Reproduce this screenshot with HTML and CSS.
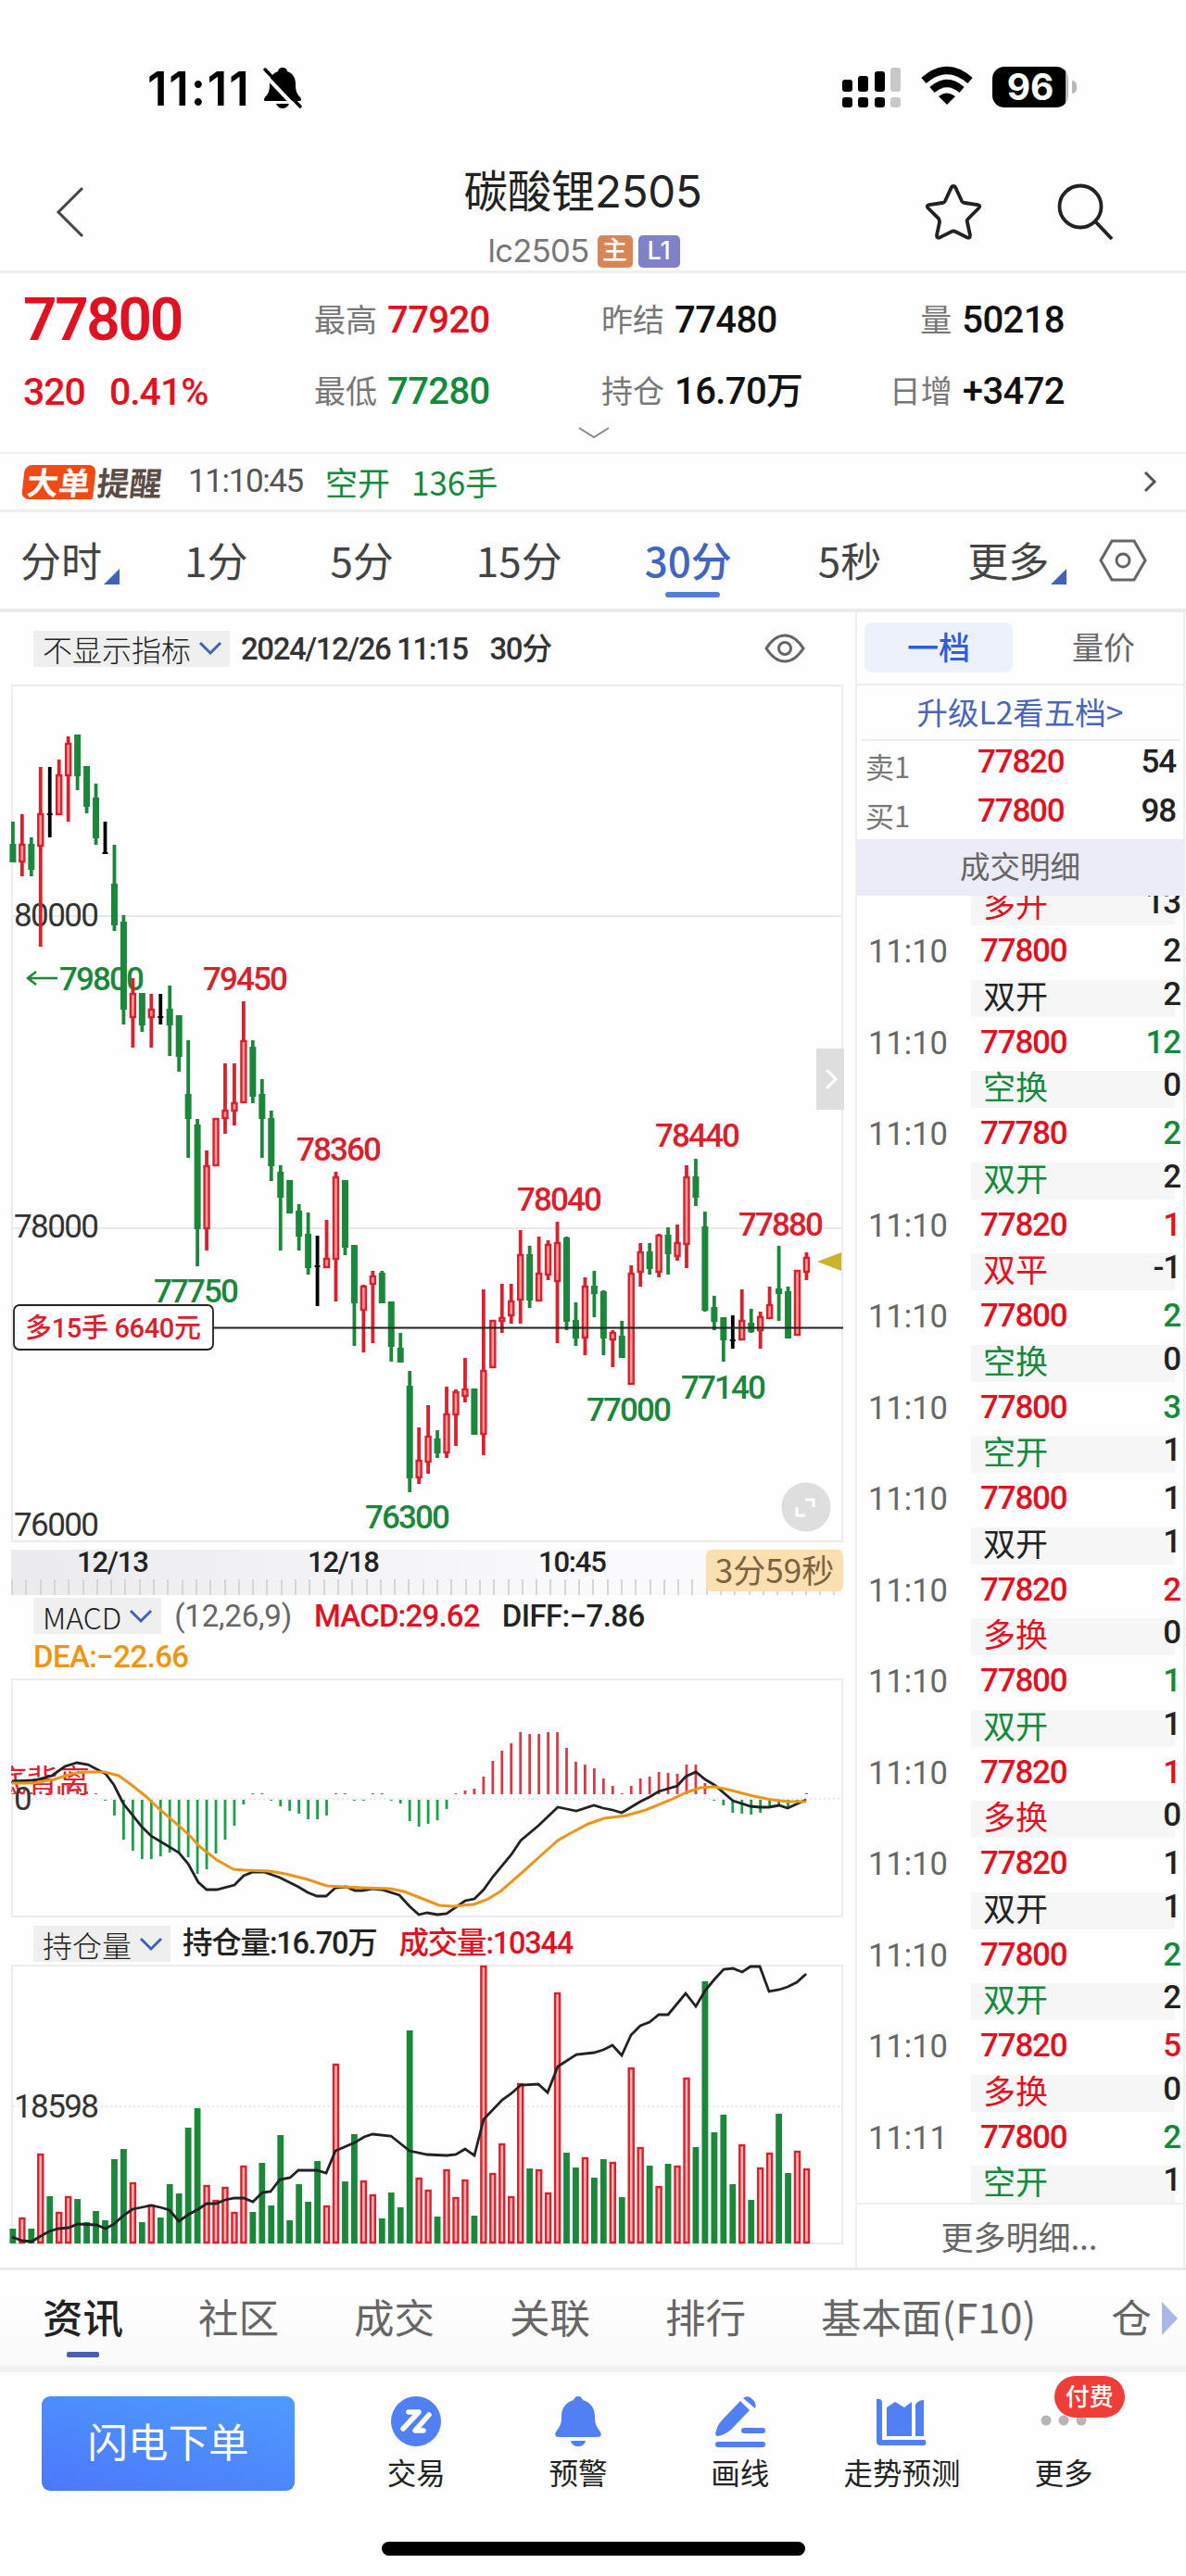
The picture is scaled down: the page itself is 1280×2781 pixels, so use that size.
FILE: index.html
```html
<!DOCTYPE html>
<html lang="zh-CN">
<head>
    <meta charset="UTF-8">
    <meta name="viewport" content="width=device-width, initial-scale=1.0">
    <title>碳酸锂2505</title>
    <link rel="stylesheet" href="styles.css">
    <script src="chart.js" defer></script>
</head>
<body>
    <div class="status-bar">
        <span class="clock">11:11</span>
        <svg class="mute" width="44" height="46" viewBox="0 0 44 46">
            <path d="M22 1c3 0 5 2 5 4 6 2 9 7 9 14 0 8 2 11 5 14 2 3 1 4-1 4H4c-2 0-3-1-1-4 3-3 5-6 5-14 0-7 3-12 9-14 0-2 2-4 5-4z"/>
            <path d="M15 40h14c-1 3-4 5-7 5s-6-2-7-5z"/>
            <path d="M-1 5l40 42" stroke="#fff" stroke-width="4"/>
            <path d="M3 3l38 40" stroke="#000" stroke-width="3.5" stroke-linecap="round"/>
        </svg>
        <svg class="signal" width="64" height="46" viewBox="0 0 64 46">
            <rect x="0" y="14" width="11" height="13" rx="3"/><rect x="17" y="10" width="11" height="17" rx="3"/><rect x="35" y="5" width="11" height="22" rx="3"/>
            <rect x="52" y="1" width="11" height="26" rx="3" fill="#c8c8c8"/>
            <rect x="0" y="33" width="11" height="11" rx="3"/><rect x="17" y="33" width="11" height="11" rx="3"/><rect x="35" y="33" width="11" height="11" rx="3"/>
            <rect x="52" y="33" width="11" height="11" rx="3" fill="#c8c8c8"/>
        </svg>
        <svg class="wifi" width="56" height="42" viewBox="0 0 56 42" fill="none" stroke="#000" stroke-width="8">
            <path d="M3 15Q28-7 53 15"/>
            <path d="M12 25Q28 11 44 25"/>
            <path d="M28 41l-9-9q9-7 18 0z" fill="#000" stroke="none"/>
        </svg>
        <span class="battery">96</span><i class="battery-tip"></i>
    </div>

    <header class="header">
        <svg class="back" width="30" height="56" viewBox="0 0 30 56"><path d="M28 2L2 28l26 26"/></svg>
        <div class="title">
            <h1>碳酸锂2505</h1>
            <p>lc2505<b class="tag main">主</b><b class="tag level">L1</b></p>
        </div>
        <svg class="star" width="62" height="62" viewBox="0 0 62 62"><path d="M31 3q2 0 3 3l6 13q1 2 3 2l14 2q4 1 1 4L47 38q-2 2-1 4l3 14q0 4-4 2l-12-6q-2-1-4 0l-12 6q-4 2-4-2l3-14q0-2-1-4L4 27q-3-3 1-4l14-2q2 0 3-2l6-13q1-3 3-3z"/></svg>
        <svg class="search" width="62" height="62" viewBox="0 0 62 62"><circle cx="25" cy="25" r="22.500"/><path d="M41 41l18 19"/></svg>
    </header>

    <section class="quote">
        <div class="price num red">77800</div>
        <div class="cell"><span>最高</span><b class="num red">77920</b></div>
        <div class="cell"><span>昨结</span><b class="num">77480</b></div>
        <div class="cell right"><span>量</span><b class="num">50218</b></div>
        <div class="change num red"><span>320</span><span>0.41%</span></div>
        <div class="cell"><span>最低</span><b class="num green">77280</b></div>
        <div class="cell"><span>持仓</span><b class="num">16.70万</b></div>
        <div class="cell right"><span>日增</span><b class="num">+3472</b></div>
        <svg class="more" width="34" height="14" viewBox="0 0 34 14"><path d="M1 2l16 10L33 2"/></svg>
    </section>

    <section class="alert">
        <b class="big">大单</b><b class="remind">提醒</b>
        <span class="num time">11:10:45</span>
        <span class="green dir">空开</span>
        <span class="green vol">136手</span>
        <svg width="14" height="24" viewBox="0 0 14 24"><path d="M2 2l10 10L2 22"/></svg>
    </section>

    <nav class="period">
        <span class="drop">分时</span>
        <span>1分</span>
        <span>5分</span>
        <span>15分</span>
        <span class="active">30分</span>
        <span class="sec">5秒</span>
        <span class="drop other">更多</span>
        <svg width="52" height="46" viewBox="0 0 52 46"><path d="M14 2h24l12 21-12 21H14L2 23z"/><circle cx="26" cy="23" r="7"/></svg>
    </nav>

    <main class="content">
        <div class="charts">
            <div class="bar top">
                <span class="select">不显示指标<svg width="26" height="16" viewBox="0 0 26 16"><path d="M2 2l11 11L24 2"/></svg></span>
                <span class="num date">2024/12/26 11:15</span>
                <span class="num period-name">30分</span>
                <svg class="eye" width="44" height="32" viewBox="0 0 44 32"><path d="M2 16Q11 2 22 2t20 14Q33 30 22 30T2 16z"/><circle cx="22" cy="16" r="6.500"/></svg>
            </div>
            <svg class="plot" id="kline" width="898" height="926" viewBox="0 0 898 926"></svg>
            <div class="axis">
                <span>12/13</span><span>12/18</span><span>10:45</span>
                <b>3分59秒</b>
            </div>
            <div class="bar macd">
                <span class="select">MACD<svg width="26" height="16" viewBox="0 0 26 16"><path d="M2 2l11 11L24 2"/></svg></span>
                <span class="num gray">(12,26,9)</span>
                <span class="num red">MACD:29.62</span>
                <span class="num diff">DIFF:−7.86</span>
                <span class="num dea">DEA:−22.66</span>
            </div>
            <svg class="plot" id="macd" width="898" height="258" viewBox="0 0 898 258"></svg>
            <div class="bar hold">
                <span class="select">持仓量<svg width="26" height="16" viewBox="0 0 26 16"><path d="M2 2l11 11L24 2"/></svg></span>
                <span class="num">持仓量:16.70万</span>
                <span class="num red">成交量:10344</span>
            </div>
            <svg class="plot" id="volume" width="898" height="302" viewBox="0 0 898 302"></svg>
        </div>

        <aside class="orders">
            <div class="switch"><span class="active">一档</span><span>量价</span></div>
            <div class="upgrade">升级L2看五档&gt;</div>
            <div class="level-row"><span>卖1</span><b class="num red">77820</b><b class="num">54</b></div>
            <div class="level-row"><span>买1</span><b class="num red">77800</b><b class="num">98</b></div>
            <div class="detail-title">成交明细</div>
            <div class="trades" id="trades"></div>
            <div class="detail-more">更多明细...</div>
        </aside>
    </main>

    <nav class="tabs">
        <span class="active">资讯</span>
        <span>社区</span>
        <span>成交</span>
        <span>关联</span>
        <span>排行</span>
        <span>基本面(F10)</span>
        <span>仓</span>
        <i class="next"></i>
    </nav>

    <footer class="toolbar">
        <button>闪电下单</button>
        <div class="tool">
            <svg width="56" height="56" viewBox="0 0 56 56"><circle cx="28" cy="28" r="27"/><path d="M20 18h11L14 36M42 21L27 38h9" stroke="#fff" stroke-width="5.500" fill="none" stroke-linecap="round" stroke-linejoin="round"/></svg>
            <span>交易</span>
        </div>
        <div class="tool">
            <svg width="56" height="56" viewBox="0 0 56 56"><path d="M28 1c3 0 4 2 5 4 9 3 13 9 13 18 0 8 2 11 5 15s2 7-2 7H7c-4 0-5-3-2-7s5-7 5-15c0-9 4-15 13-18 1-2 2-4 5-4zM20 49h16c-1 4-4 6-8 6s-7-2-8-6z"/></svg>
            <span>预警</span>
        </div>
        <div class="tool">
            <svg width="56" height="56" viewBox="0 0 56 56"><path d="M28 6l10 10-20 21Q9 44 3 44q-3-1-1-6 2-7 6-11zM31 3q5-4 10 1t3 10z"/><rect x="29" y="35" width="26" height="6" rx="3"/><rect x="1" y="50" width="54" height="6" rx="3"/></svg>
            <span>画线</span>
        </div>
        <div class="tool">
            <svg width="56" height="56" viewBox="0 0 56 56"><path d="M1 4q5-1 6 3v41h46q3 3 0 6H5q-4 0-4-4z"/><path d="M12 13L21 7l10 6 8-6v37H12zM43 10q3-5 9-5v39h-9z"/></svg>
            <span>走势预测</span>
        </div>
        <div class="tool">
            <svg class="dots" width="56" height="56" viewBox="0 0 56 56"><circle cx="9" cy="27" r="5.500"/><circle cx="28" cy="27" r="5.500"/><circle cx="47" cy="27" r="5.500"/></svg>
            <span>更多</span>
            <em class="pay">付费</em>
        </div>
    </footer>
    <div class="home"></div>
</body>
</html>
```
FILE: styles.css
```css
* {
    box-sizing: border-box;
}

body {
    margin: 0;
    width: 1280px;
    height: 2781px;
    overflow: hidden;
    background: #fefefe;
    color: #222;
    font-family: "Noto Sans CJK SC", sans-serif;
    font-size: 34px;
    font-weight: 400;
}

svg {
    display: block;
    flex: none;
    overflow: visible;
}

i, em {
    font-style: normal;
}

.num {
    font-family: Roboto, "Noto Sans CJK SC", sans-serif;
    font-weight: 500;
    white-space: nowrap;
}

.red { color: #e01222; }
.green { color: #128a3c; }
.black { color: #222; }
.gray { color: #666; }

/* 状态栏 */
.status-bar {
    height: 188px;
    padding: 72px 0 0 159px;
    display: flex;
    align-items: flex-start;
}

.clock {
    width: 124px;
    font: 600 51px/47px Inter, sans-serif;
    letter-spacing: 1.8px;
    white-space: nowrap;
    color: #000;
}

.signal {
    margin-left: 582px;
}

.wifi {
    margin: 0 21px 0 21px;
}

.battery {
    width: 82px;
    height: 44px;
    border-radius: 13px;
    background: linear-gradient(90deg, #000 79px, #bbb 79px);
    color: #fff;
    font: 700 39px/44px Inter, sans-serif;
    text-align: center;
}

.battery-tip {
    width: 5px;
    height: 14px;
    margin: 15px 0 0 4px;
    border-radius: 0 5px 5px 0;
    background: #b8b8b8;
}

/* 标题 */
.header {
    height: 107px;
    display: flex;
    border-bottom: 3px solid #efefef;
}

.header svg {
    fill: none;
    stroke: #222;
    stroke-width: 3.8;
}

.header .back {
    margin: 13px 0 0 61px;
    stroke: #444;
    stroke-width: 3;
}

.title {
    width: 500px;
    margin-left: 289px;
    text-align: center;
}

.title h1 {
    width: 500px;
    margin: -10px 0 0 -1px;
    font: 400 47.5px/58px Inter, "Noto Sans CJK SC", sans-serif;
    letter-spacing: -0.3px;
}

.title p {
    display: flex;
    justify-content: center;
    align-items: center;
    height: 42px;
    margin: 14px 0 0;
    font: 400 34.5px/42px Inter, "Noto Sans CJK SC", sans-serif;
    letter-spacing: -0.6px;
    color: #777;
}

.tag {
    height: 35px;
    line-height: 34px;
    border-radius: 5px;
    color: #fff;
    font-size: 27px;
    font-weight: 500;
    letter-spacing: 0;
}

.tag.main {
    width: 38px;
    margin-left: 9px;
    background: #d98555;
}

.tag.level {
    width: 45px;
    margin-left: 6px;
    background: #8181c8;
}

.header .star {
    margin: 10px 0 0 118px;
}

.header .search {
    margin: 10px 0 0 81px;
}

/* 行情 */
.quote {
    position: relative;
    height: 195px;
    padding: 12px 0 0 25px;
    display: grid;
    grid-template-columns: 314px 310px 280px 220px;
    grid-template-rows: 77px 77px;
    align-items: center;
    border-bottom: 2px solid #efefef;
}

.price {
    font-size: 64px;
    font-weight: 600;
    letter-spacing: -2.4px;
}

.change {
    display: flex;
    gap: 26px;
    font-size: 41px;
    letter-spacing: -1px;
}

.cell {
    display: flex;
    align-items: center;
    gap: 11px;
    line-height: 60px;
    color: #777;
}

.cell span {
    margin-top: -3px;
}

.cell b {
    font-size: 40px;
    letter-spacing: -0.6px;
}

.cell b:not(.red):not(.green) {
    color: #111;
}

.cell.right {
    justify-content: flex-end;
}

.quote .more {
    position: absolute;
    left: 624px;
    bottom: 14px;
    fill: none;
    stroke: #888;
    stroke-width: 2;
}

.alert {
    height: 63px;
    padding-left: 25px;
    display: flex;
    align-items: center;
    line-height: 60px;
    border-bottom: 3px solid #efefef;
}

.alert .big {
    width: 77px;
    height: 37px;
    border-radius: 8px 8px 2px 8px;
    background: #f34a15;
    color: #fff;
    font-size: 34px;
    font-weight: 700;
    line-height: 35px;
    text-align: center;
    transform: skewX(-6deg);
}

.alert .remind {
    margin-left: 3px;
    font-size: 35px;
    font-weight: 700;
    line-height: 56px;
    color: #5c4c46;
    transform: skewX(-6deg);
}

.alert .time {
    width: 148px;
    margin-left: 28px;
    font-weight: 400;
    font-size: 35px;
    letter-spacing: -1.4px;
    color: #555;
}

.alert .dir {
    width: 93px;
    font-size: 35px;
    line-height: 56px;
}

.alert .vol {
    font-size: 35px;
    line-height: 56px;
}

.alert svg {
    margin-left: auto;
    margin-right: 32px;
    fill: none;
    stroke: #555;
    stroke-width: 3;
}

.period {
    height: 108px;
    padding-left: 22px;
    display: flex;
    align-items: center;
    gap: 89px;
    font-size: 44px;
    line-height: 102px;
    color: #444;
    border-bottom: 4px solid #ebebeb;
}

.period span {
    position: relative;
    top: -1px;
    flex: none;
    white-space: nowrap;
}

.period .active {
    color: #4266c0;
    font-weight: 500;
}

.period .active::after {
    content: "";
    position: absolute;
    left: 22px;
    bottom: 10px;
    width: 59px;
    height: 6px;
    border-radius: 3px;
    background: #5080dc;
}

.period .sec,
.period .other {
    margin-left: 4px;
}

.drop::after {
    content: "";
    position: absolute;
    right: -19px;
    bottom: 24px;
    border: solid transparent;
    border-width: 17px 0 0 17px;
    border-bottom: 17px solid #4264b8;
    border-top: 0;
}

.period svg {
    margin-left: -35px;
    fill: none;
    stroke: #666;
    stroke-width: 3;
}

/* 图表 */
.content {
    height: 1790px;
    display: flex;
    border-bottom: 3px solid #ebebeb;
}

.charts {
    flex: none;
    width: 925px;
    padding-left: 12px;
    border-right: 2px solid #eee;
}

.bar {
    display: flex;
    align-items: center;
    padding-left: 24px;
    font-size: 32px;
    line-height: 39px;
}

.bar .num {
    font-size: 33px;
    letter-spacing: -0.6px;
}

.select {
    display: flex;
    align-items: center;
    height: 39px;
    padding: 0 8px 0 10px;
    background: #efefef;
    font-weight: 300;
    line-height: 36px;
    white-space: nowrap;
}

.select svg {
    margin-left: 8px;
    fill: none;
    stroke: #3f62b8;
    stroke-width: 3;
}

.bar.top {
    height: 78px;
}

.bar.top .num {
    margin-left: 12px;
    color: #333;
    letter-spacing: -1.450px;
}

.bar.top .period-name {
    margin-left: 24px;
}

.eye {
    margin-left: auto;
    margin-right: 54px;
    fill: none;
    stroke: #666;
    stroke-width: 3;
}

.plot text {
    font-family: Roboto, "Noto Sans CJK SC", sans-serif;
    font-size: 35px;
    font-weight: 500;
}

.plot .scale {
    font-weight: 400;
}

.axis {
    position: relative;
    height: 49px;
    margin: 8px 0 3px;
    width: 898px;
    display: flex;
    padding-left: 71px;
    background: repeating-linear-gradient(90deg, #d6d6d6 0 2px, transparent 2px 15.300px) 0 100% / 100% 17px no-repeat, linear-gradient(90deg, #ebebee, #fafafc 70%);
    font: 500 31px/27px Roboto, sans-serif;
}

.axis span {
    width: 249px;
    letter-spacing: -1.2px;
}

.axis b {
    position: absolute;
    right: 0;
    top: 0;
    width: 148px;
    height: 45px;
    border-radius: 6px;
    background: #fadfb0;
    color: #7c6340;
    font: 400 35px/42px "Noto Sans CJK SC", sans-serif;
    text-align: center;
}

.bar.macd {
    height: 87px;
    flex-wrap: wrap;
    align-content: flex-start;
    row-gap: 6px;
}

.bar.macd .num {
    line-height: 37px;
}

.bar.macd .select {
    padding-right: 9px;
}

.bar.macd .gray {
    margin-left: 14px;
    font-weight: 400;
    letter-spacing: -0.2px;
}

.bar.macd .red {
    margin-left: 24px;
    letter-spacing: -0.8px;
}

.bar.macd .diff {
    margin-left: 24px;
}

.bar.macd .dea {
    width: 800px;
    color: #f0950f;
}

.bar.hold {
    height: 51px;
    padding-top: 6px;
}

.bar.hold .num {
    margin-left: 13px;
    font-size: 32.5px;
    letter-spacing: -1.2px;
}

.bar.hold .red {
    margin-left: 24px;
}

/* 盘口 */
.orders {
    flex: none;
    width: 354px;
    border-right: 2px solid #eee;
}

.switch {
    height: 79px;
    padding: 11px 8px;
    display: flex;
    line-height: 52px;
    border-bottom: 2px solid #eee;
    color: #666;
}

.switch span {
    flex: none;
    width: 160px;
    height: 54px;
    margin-right: 18px;
    text-align: center;
}

.switch .active {
    border-radius: 8px;
    background: #ecf1fc;
    color: #2f5ce0;
    font-weight: 500;
}

.upgrade {
    height: 60px;
    margin: 0 4px;
    font-size: 33.5px;
    line-height: 55px;
    text-align: center;
    color: #4b66b8;
    border-bottom: 2px solid #eee;
}

.level-row {
    height: 53px;
    padding: 0 8px 0 9px;
    display: flex;
    align-items: center;
    font-size: 31px;
    line-height: 46px;
    color: #777;
}

.level-row span {
    width: 121px;
}

.level-row b,
.trade b {
    font-size: 35px;
    letter-spacing: -1.2px;
}

.level-row b {
    padding-bottom: 7px;
}

.level-row b:last-child {
    margin-left: auto;
    color: #222;
}

.detail-title {
    height: 61px;
    line-height: 56px;
    font-size: 32.5px;
    text-align: center;
    background: #ecebf8;
    color: #666;
}

.trades {
    height: 1413px;
    display: flex;
    flex-direction: column;
    justify-content: flex-end;
    overflow: hidden;
    border-bottom: 2px solid #eee;
}

.trade {
    height: 98.5px;
    flex: none;
}

.trade .line {
    height: 58.5px;
    padding: 0 3px 2px 12px;
    display: flex;
    align-items: center;
    line-height: 40px;
}

.trade .at {
    width: 121px;
    font-size: 34.5px;
    font-weight: 400;
    color: #666;
}

.trade .line b:last-child {
    margin-left: auto;
}

.trade .kind {
    height: 40px;
    margin: 0 9px 0 123px;
    padding-left: 13px;
    display: flex;
    justify-content: space-between;
    background: #f6f6f6;
    font-size: 35px;
    line-height: 32px;
}

.trade .kind b {
    margin-right: -6px;
    line-height: 31px;
}

.detail-more {
    line-height: 68px;
    margin-left: -2px;
    font-size: 35px;
    text-align: center;
    color: #666;
}

/* 底部 */
.tabs {
    position: relative;
    height: 103px;
    padding-left: 46px;
    display: flex;
    gap: 81px;
    font-size: 43.5px;
    line-height: 100px;
    white-space: nowrap;
    color: #666;
    background: linear-gradient(#fff, #fafafa);
}

.tabs .active {
    position: relative;
    color: #222;
    font-weight: 500;
}

.tabs .active::after {
    content: "";
    position: absolute;
    left: 26px;
    bottom: 9px;
    width: 35px;
    height: 6px;
    border-radius: 2px;
    background: #4a60ad;
}

.next {
    position: absolute;
    right: 9px;
    top: 34px;
    border: 18px solid transparent;
    border-left-color: #a9b8e6;
    border-width: 18px 0 18px 17px;
}

.toolbar {
    height: 182px;
    padding: 26px 0 0 45px;
    display: flex;
    border-top: 7px solid #f1f1f1;
}

.toolbar button {
    width: 273px;
    height: 102px;
    margin-right: 44px;
    padding: 0 0 6px;
    border: none;
    border-radius: 9px;
    background: linear-gradient(15deg, #4c78fc, #4f9bfd);
    color: #fff;
    font: 400 43.5px/90px "Noto Sans CJK SC", sans-serif;
}

.tool {
    position: relative;
    top: -1px;
    width: 174.700px;
    display: flex;
    flex-direction: column;
    align-items: center;
    font-size: 31.500px;
    line-height: 52px;
    white-space: nowrap;
}

.tool svg {
    fill: #5080f4;
}

.tool .dots {
    fill: #b5b5b5;
}

.pay {
    position: absolute;
    left: 77px;
    top: -21px;
    width: 76px;
    height: 45px;
    border-radius: 23px;
    background: #f13d38;
    color: #fff;
    font-size: 26px;
    font-weight: 500;
    line-height: 42px;
    text-align: center;
}

.home {
    width: 457px;
    height: 15px;
    margin: 8px 0 0 412px;
    border-radius: 8px;
    background: #000;
}
```
FILE: chart.js
```js
const RED = '#d9202c';
const GREEN = '#1b873b';
const STEP = 9.96;
const colors = { r: RED, g: GREEN, k: '#000' };

// type, high, body top, body bottom, low
const candles = [
    ['g', 148, 172, 192, 192], ['r', 140, 172, 192, 207], ['g', 165, 172, 200, 207], ['r', 89, 139, 175, 283],
    ['k', 89, 140, 140, 165], ['r', 81, 97, 141, 141], ['r', 56, 63, 99, 148], ['g', 54, 54, 99, 114],
    ['g', 88, 88, 132, 139], ['g', 107, 122, 166, 173], ['k', 148, 182, 182, 182], ['g', 173, 215, 260, 266],
    ['g', 249, 256, 351, 367], ['r', 317, 333, 360, 392], ['g', 333, 333, 368, 375], ['r', 334, 350, 360, 392],
    ['k', 334, 359, 359, 367], ['g', 325, 350, 368, 401], ['g', 357, 357, 402, 418], ['g', 384, 442, 469, 511],
    ['g', 469, 475, 588, 628], ['r', 503, 519, 588, 611], ['r', 468, 468, 520, 520], ['r', 409, 459, 469, 485],
    ['r', 409, 451, 461, 476], ['r', 342, 384, 452, 452], ['g', 384, 391, 445, 452], ['g', 426, 442, 469, 511],
    ['g', 460, 468, 520, 536], ['g', 519, 526, 554, 611], ['g', 535, 535, 571, 571], ['g', 561, 568, 596, 611],
    ['g', 570, 593, 630, 637], ['k', 595, 628, 628, 671], ['r', 578, 619, 630, 630], ['r', 526, 531, 621, 666],
    ['g', 535, 535, 608, 616], ['g', 605, 605, 668, 714], ['r', 648, 649, 676, 721], ['r', 633, 638, 648, 711],
    ['g', 633, 635, 668, 668], ['g', 666, 666, 715, 731], ['g', 700, 716, 732, 732], ['g', 741, 757, 857, 872],
    ['r', 802, 837, 857, 863], ['r', 778, 811, 840, 852], ['g', 805, 814, 830, 835], ['r', 758, 787, 830, 835],
    ['r', 761, 763, 789, 822], ['r', 727, 760, 769, 775], ['g', 760, 760, 810, 810], ['r', 653, 740, 810, 832],
    ['r', 686, 686, 738, 738], ['r', 647, 683, 688, 700], ['r', 647, 665, 682, 690], ['r', 589, 615, 665, 690],
    ['g', 606, 615, 665, 673], ['r', 596, 635, 666, 666], ['r', 600, 604, 638, 643], ['r', 580, 602, 645, 711],
    ['g', 596, 597, 688, 697], ['g', 667, 686, 706, 714], ['r', 640, 649, 706, 724], ['g', 633, 649, 658, 683],
    ['g', 654, 655, 706, 724], ['r', 697, 699, 708, 737], ['g', 687, 703, 727, 727], ['r', 627, 635, 756, 756],
    ['r', 603, 612, 635, 650], ['g', 603, 612, 631, 637], ['r', 593, 594, 635, 640], ['g', 586, 594, 615, 637],
    ['r', 583, 602, 618, 622], ['r', 519, 531, 605, 630], ['g', 512, 531, 554, 563], ['g', 569, 585, 676, 677],
    ['g', 660, 672, 688, 697], ['g', 683, 683, 708, 731], ['k', 681, 708, 708, 717], ['r', 653, 686, 708, 708],
    ['g', 674, 689, 699, 700], ['r', 677, 682, 698, 717], ['r', 650, 669, 685, 685], ['g', 606, 652, 658, 687],
    ['g', 650, 655, 706, 706], ['r', 632, 632, 703, 703], ['r', 613, 618, 635, 643]
];

const volumes = [
    15, 27, 15, 96, 50, 33, 50, 47, 22, 34, 24, 90, 101, 65, 22, 41, 27, 63, 53, 124, 145, 62, 46, 60, 33, 83, 33, 86, 40,
    116, 24, 63, 44, 88, 40, 193, 66, 117, 67, 52, 26, 54, 38, 229, 70, 57, 28, 79, 49, 68, 29, 299, 75, 107, 50, 172, 80,
    79, 54, 270, 97, 81, 92, 70, 90, 87, 49, 189, 103, 83, 61, 85, 83, 178, 103, 282, 119, 138, 63, 106, 46, 81, 97, 139,
    75, 99, 80
];

const macd = [
    1, 1, 2, 3, 6, 9, 11, 6, 3, 1, -1, -17, -43, -55, -64, -64, -61, -57, -58, -62, -80, -75, -58, -43, -28, -5, 1, 1, -1,
    -7, -12, -15, -21, -21, -17, 1, 1, -1, -1, 1, 1, -1, -4, -23, -29, -26, -22, -10, 1, 4, 6, 19, 36, 47, 55, 67, 65, 65,
    67, 67, 50, 35, 32, 28, 17, 9, 1, 9, 17, 19, 24, 23, 22, 32, 32, 12, -1, -6, -14, -15, -16, -14, -8, -7, -9, -3, 1
];

const diff = '1,111 25,110 44,105 58,95 71,91 83,93 102,103 111,115 121,135 141,160 151,170 181,188 191,200 202,220 211,228 222,228 241,223 251,213 261,209 273,209 290,215 310,225 320,231 330,235 340,235 350,226 362,225 371,229 379,229 390,227 400,228 419,234 430,246 440,255 449,253 460,255 470,254 490,240 500,238 510,228 520,214 540,190 550,175 569,159 590,139 600,141 610,143 629,137 639,140 649,142 659,145 679,133 689,128 699,122 719,116 728,106 739,101 749,109 759,115 779,132 798,138 808,139 818,139 829,137 838,140 858,131';
const dea = '1,113 24,113 47,109 65,103 80,101 101,101 116,105 130,115 145,127 160,141 181,159 193,170 204,182 222,196 240,206 252,207 279,208 296,211 320,217 341,224 379,226 409,227 424,230 442,237 462,245 477,246 499,244 513,239 528,230 551,210 572,191 590,175 602,168 623,157 640,151 664,148 685,142 712,131 729,123 744,118 759,117 774,120 801,127 821,131 839,133 858,133';
const holding = '1,294 12,298 22,299 32,293 41,288 51,285 62,284 72,280 92,281 102,285 111,280 121,271 131,264 141,262 151,260 161,262 171,265 181,277 191,270 202,264 211,258 221,258 231,254 241,252 251,252 261,256 271,246 280,245 290,232 301,230 310,222 330,222 340,225 350,201 371,192 381,186 390,183 410,185 430,201 449,205 470,206 480,205 490,199 500,206 510,167 530,146 540,139 550,130 569,129 579,138 590,110 610,97 629,95 639,92 649,87 659,98 669,76 679,66 689,62 699,54 709,54 728,31 739,45 749,28 759,16 769,5 779,4 789,8 798,2 808,2 818,29 829,27 838,24 848,19 858,10';

// time, price, volume, volume color, kind, kind color, position change
const trades = [
    ['11:10', '77800', 5, 'red', '多开', 'red', 13],
    ['11:10', '77800', 2, 'black', '双开', 'black', 2],
    ['11:10', '77800', 12, 'green', '空换', 'green', 0],
    ['11:10', '77780', 2, 'green', '双开', 'green', 2],
    ['11:10', '77820', 1, 'red', '双平', 'red', -1],
    ['11:10', '77800', 2, 'green', '空换', 'green', 0],
    ['11:10', '77800', 3, 'green', '空开', 'green', 1],
    ['11:10', '77800', 1, 'black', '双开', 'black', 1],
    ['11:10', '77820', 2, 'red', '多换', 'red', 0],
    ['11:10', '77800', 1, 'green', '双开', 'green', 1],
    ['11:10', '77820', 1, 'red', '多换', 'red', 0],
    ['11:10', '77820', 1, 'black', '双开', 'black', 1],
    ['11:10', '77800', 2, 'green', '双开', 'green', 2],
    ['11:10', '77820', 5, 'red', '多换', 'red', 0],
    ['11:11', '77800', 2, 'green', '空开', 'green', 1]
];

const x = i => 1.9 + i * STEP;
const frame = h => `<rect x="1" y="1" width="896" height="${h - 2}" fill="none" stroke="#ececec" stroke-width="2"/>`;
const grid = (y, dash) => `<path d="M2 ${y}H896" stroke="#e2e2e2" stroke-width="1.5" stroke-dasharray="${dash || 'none'}"/>`;
const label = (t, lx, y, color) => `<text x="${lx}" y="${y}" fill="${color}" textLength="92">${t}</text>`;
const scale = (t, y) => `<text class="scale" x="3" y="${y}" fill="#333" textLength="${t.length * 18.4}">${t}</text>`;

function drawKline() {
    let s = frame(926) + grid(250) + grid(587);
    s += scale('80000', 261) + scale('78000', 597) + scale('76000', 919);
    s += `<path d="M50 317H18M27 310L18 317L27 324" fill="none" stroke="${GREEN}" stroke-width="2.5"/>`;
    s += label('79800', 52, 330, GREEN);
    candles.forEach(([type, high, top, bottom, low], i) => {
        const c = colors[type];
        s += `<path d="M${x(i)} ${high}V${low}" stroke="${c}" stroke-width="3.8"/>`;
        if (type === 'k') {
            s += `<path d="M${x(i) - 3} ${top}h6" stroke="${c}" stroke-width="2"/>`;
        } else if (type === 'g') {
            s += `<rect x="${x(i) - 3.5}" y="${top}" width="7" height="${bottom - top}" fill="${c}"/>`;
        } else {
            s += `<rect x="${x(i) - 2.5}" y="${top + 1}" width="5" height="${Math.max(bottom - top - 2, 2)}" fill="#f59a9a" stroke="${c}" stroke-width="2.4"/>`;
        }
    });
    s += label('79450', 207, 330, RED) + label('78360', 308, 514, RED) + label('78040', 546, 568, RED);
    s += label('78440', 695, 499, RED) + label('77880', 785, 595, RED);
    s += label('77750', 154, 667, GREEN) + label('76300', 382, 911, GREEN) + label('77000', 621, 795, GREEN) + label('77140', 723, 771, GREEN);
    s += '<path d="M218 694.500H898" stroke="#222" stroke-width="1.8"/>';
    s += '<rect x="3" y="670" width="215" height="48" rx="6" fill="#fff" stroke="#222" stroke-width="1.800"/>';
    s += `<text x="15" y="705" fill="${RED}" style="font-size:29px" textLength="190">多15手 6640元</text>`;
    s += '<path d="M870 623L896 613V633Z" fill="#cdb02c"/>';
    s += '<rect x="869" y="393" width="30" height="66" fill="#dedede"/><path d="M880 416L890 426L880 436" fill="none" stroke="#fff" stroke-width="3"/>';
    s += '<circle cx="858" cy="888" r="26.500" fill="#dedede"/><path d="M857 880h9v8M848 888v9h9" fill="none" stroke="#fff" stroke-width="3"/>';
    document.getElementById('kline').innerHTML = s;
}

function drawMacd() {
    let s = frame(258) + grid(130, '2 3');
    s += '<clipPath id="left"><rect width="100" height="258"/></clipPath>';
    s += `<text x="-17" y="123" fill="${RED}" style="font-size:34px;font-weight:400" textLength="102" clip-path="url(#left)">底背离</text>`;
    macd.forEach((v, i) => {
        const y = v > 0 ? 125 : 131;
        s += `<path d="M${x(i)} ${y}V${y - v}" stroke="${v > 0 ? '#d93a4a' : '#19a04c'}" stroke-width="2.8"/>`;
    });
    s += scale('0', 142);
    s += `<polyline points="${diff}" fill="none" stroke="#222" stroke-width="2.800"/>`;
    s += `<polyline points="${dea}" fill="none" stroke="#ea951c" stroke-width="3"/>`;
    document.getElementById('macd').innerHTML = s;
}

function drawVolume() {
    let s = frame(302) + grid(153, '2 3') + scale('18598', 165);
    volumes.forEach((v, i) => {
        if (candles[i][0] === 'r') {
            s += `<rect x="${x(i) - 2.5}" y="${301 - v}" width="5" height="${v - 1}" fill="#f8b4b4" stroke="${RED}" stroke-width="2.4"/>`;
        } else {
            s += `<rect x="${x(i) - 3.4}" y="${300 - v}" width="6.8" height="${v + 1}" fill="${GREEN}"/>`;
        }
    });
    s += `<polyline points="${holding}" fill="none" stroke="#222" stroke-width="2.800"/>`;
    document.getElementById('volume').innerHTML = s;
}

function drawTrades() {
    document.getElementById('trades').innerHTML = trades.map(t => `
        <div class="trade">
            <div class="line"><span class="num at">${t[0]}</span><b class="num red">${t[1]}</b><b class="num ${t[3]}">${t[2]}</b></div>
            <div class="kind"><span class="${t[5]}">${t[4]}</span><b class="num">${t[6]}</b></div>
        </div>`).join('');
}

drawKline();
drawMacd();
drawVolume();
drawTrades();
```
